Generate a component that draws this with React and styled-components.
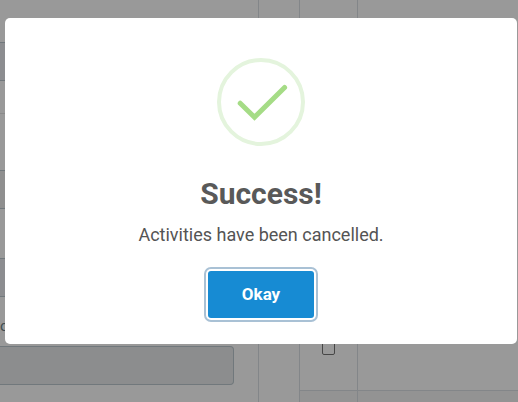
import React, { useState } from "react";
import styled, { createGlobalStyle } from "styled-components";

const GlobalStyle = createGlobalStyle`
  * {
    box-sizing: border-box;
  }
  body {
    margin: 0;
    overflow: hidden;
    background: #ffffff;
    font-family: Roboto, "Liberation Sans", sans-serif;
    color: #545454;
  }
`;

const FilterPanel = () => {
  return (
    <Panel>
      <Field>
        <TextInput aria-label="Name" $fill="#e9ecf0" readOnly />
      </Field>
      <Divider />
      <Field>
        <SelectInput aria-label="Type" />
      </Field>
      <Field>
        <TextInput aria-label="Start" $fill="#e9ecf0" readOnly />
      </Field>
      <Field>
        <Label htmlFor="to">o</Label>
        <TextInput id="to" $fill="#e9eced" readOnly />
      </Field>
    </Panel>
  );
};

const ActivityTable = () => {
  return (
    <Table>
      <tbody>
        <Row $tall>
          <CheckCell>
            <Checkbox type="checkbox" aria-label="Select activity" />
          </CheckCell>
          <Cell />
        </Row>
        <Row $striped>
          <CheckCell />
          <Cell />
        </Row>
      </tbody>
    </Table>
  );
};

const SuccessIcon = () => (
  <Icon viewBox="0 0 88 88" fill="none" aria-hidden="true">
    <circle cx="44" cy="44" r="42" stroke="#e4f4dd" strokeWidth="4" />
    <path
      d="M23.2 45.2 37.5 59.3 67.6 29.4"
      stroke="#a5dc86"
      strokeWidth="5"
      strokeLinecap="round"
    />
  </Icon>
);

const App = () => {
  const [open, setOpen] = useState(true);
  return (
    <>
      <GlobalStyle />
      <Page>
        <FilterPanel />
        <ActivityTable />
      </Page>
      {open && (
        <Overlay>
          <Modal role="dialog" aria-modal="true" aria-labelledby="title">
            <SuccessIcon />
            <Title id="title">Success!</Title>
            <Message>Activities have been cancelled.</Message>
            <Button type="button" onClick={() => setOpen(false)}>
              Okay
            </Button>
          </Modal>
        </Overlay>
      )}
    </>
  );
};

export default App;

const Page = styled.div`
  display: grid;
  grid-template-columns: 259fr 219fr;
  align-items: start;
  gap: 40px;
  height: 100vh;
  overflow: hidden;
`;

const Panel = styled.form`
  min-height: 100vh;
  padding: 0 24px 0 0;
  border-right: 1px solid #dadfe4;
`;

const Field = styled.div`
  display: flex;
  flex-direction: column;
  justify-content: flex-end;
  height: 88px;
  &:first-child {
    height: 81px;
  }
`;

const Label = styled.label`
  padding-bottom: 12px;
  font-size: 15px;
  line-height: 16px;
  color: #6b7f89;
`;

const TextInput = styled.input`
  width: 100%;
  height: 39px;
  flex-shrink: 0;
  border: 1px solid #bcc8cf;
  border-left: 0;
  border-radius: 0 4px 4px 0;
  background: ${({ $fill }) => $fill};
  outline: none;
`;

const SelectInput = styled.select`
  width: 100%;
  height: 39px;
  border: 1px solid #bcc8cf;
  border-left: 0;
  border-radius: 0 4px 4px 0;
  background: #efefef;
  appearance: none;
`;

const Divider = styled.hr`
  height: 1px;
  margin: 32px 0 7px;
  border: 0;
  background: #e6e6e6;
`;

const Table = styled.table`
  width: 100%;
  border-collapse: separate;
  border-spacing: 0;
  border-left: 1px solid #dadfe4;
`;

const Row = styled.tr`
  height: ${({ $tall }) => ($tall ? "391px" : "80px")};
  background: ${({ $striped }) => ($striped ? "#f6f6f6" : "#ffffff")};
`;

const Cell = styled.td`
  padding: 0;
  border-bottom: 1px solid #dadfe4;
`;

const CheckCell = styled(Cell)`
  width: 58px;
  padding-bottom: 35px;
  border-right: 1px solid #dadfe4;
  text-align: center;
  vertical-align: bottom;
`;

const Checkbox = styled.input`
  display: block;
  width: 13px;
  height: 13px;
  margin: 0 auto;
  border: 1px solid #767676;
  border-radius: 2px;
  background: #ffffff;
  appearance: none;
`;

const Overlay = styled.div`
  position: fixed;
  inset: 0;
  display: flex;
  justify-content: center;
  align-items: flex-start;
  padding: 18px 1px 18px 5px;
  background: rgba(0, 0, 0, 0.4);
`;

const Modal = styled.div`
  display: flex;
  flex-direction: column;
  align-items: center;
  width: 100%;
  max-width: 512px;
  padding: 40px 20px 26px;
  border-radius: 5px;
  background: #ffffff;
`;

const Icon = styled.svg`
  width: 88px;
  height: 88px;
`;

const Title = styled.h2`
  margin: 30px 0 12px;
  font-size: 30px;
  font-weight: 700;
  line-height: 36px;
  color: #595959;
`;

const Message = styled.p`
  margin: 0 0 25px;
  font-size: 18px;
  line-height: 22px;
`;

const Button = styled.button`
  padding: 13px 34px 14px;
  border: 0;
  border-radius: 3px;
  background: #178bd3;
  box-shadow: 0 0 0 2px #ffffff, 0 0 0 4px #a9c1d5;
  color: #ffffff;
  font-family: inherit;
  font-size: 17px;
  font-weight: 700;
  line-height: 20px;
  cursor: pointer;
`;
